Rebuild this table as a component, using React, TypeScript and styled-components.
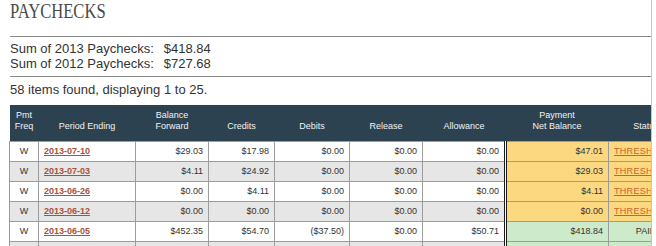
import React from "react";
import styled, { createGlobalStyle } from "styled-components";

const Global = createGlobalStyle`
  html, body { margin: 0; padding: 0; background: #fff; }
`;

const Frame = styled.div`
  width: 652px;
  min-height: 100vh;
  border-right: 1px solid #c6c6c6;
  overflow: hidden;
  padding-left: 10px;
  box-sizing: border-box;
`;

const Title = styled.h1`
  margin: 0;
  font-family: "Liberation Serif", "Times New Roman", serif;
  font-weight: normal;
  font-size: 20px;
  line-height: 22px;
  color: #4a4a4a;
  transform: scaleX(0.83);
  transform-origin: left center;
`;

const Rule = styled.div<{ $top: number }>`
  margin-top: ${(p) => p.$top}px;
  border-top: 1px solid #8a8a8a;
`;

const Summary = styled.div`
  margin-top: 4px;
  display: grid;
  grid-template-columns: max-content max-content;
  column-gap: 10px;
  font-family: "Liberation Sans", Arial, sans-serif;
  font-size: 13px;
  line-height: 15px;
  color: #333;
`;

const Count = styled.div`
  margin-top: 5px;
  font-family: "Liberation Sans", Arial, sans-serif;
  font-size: 13px;
  line-height: 15px;
  color: #333;
`;

const TableWrap = styled.div`
  margin-top: 8px;
  margin-left: -1px;
`;

const Table = styled.table`
  border-collapse: collapse;
  table-layout: fixed;
  width: 674px;
  font-family: "Liberation Sans", Arial, sans-serif;
`;

const Th = styled.th`
  background: #2c4251;
  color: #f2f2f2;
  font-weight: normal;
  font-size: 9px;
  line-height: 11px;
  text-align: center;
  vertical-align: bottom;
  padding: 0 2px 9px;
  height: 36px;
  box-sizing: border-box;
  border: none;
`;

type Tone = "plain" | "alt" | "due" | "paid";

const toneColor: Record<Tone, string> = {
  plain: "#ffffff",
  alt: "#e6e6e6",
  due: "#fcd881",
  paid: "#cdebcb",
};

const Td = styled.td<{ $tone: Tone; $align?: string; $double?: boolean }>`
  background: ${(p) => toneColor[p.$tone]};
  border: 1px solid #9c9c9c;
  ${(p) => (p.$double ? "border-left: 3px double #1a1a1a;" : "")}
  font-size: 9px;
  color: #333;
  text-align: ${(p) => p.$align ?? "right"};
  padding: 0 5px;
  height: 20px;
  box-sizing: border-box;
  white-space: nowrap;
  overflow: hidden;
`;

const DateLink = styled.a`
  color: #a9533b;
  font-weight: bold;
  text-decoration: underline;
`;

const StatusLink = styled.a`
  color: #c5652c;
  text-decoration: underline;
  letter-spacing: 0.3px;
`;

type Row = {
  date: string;
  fwd: string;
  credits: string;
  debits: string;
  release: string;
  allowance: string;
  net: string;
  status: "THRESHOLD" | "PAID";
};

const rows: Row[] = [
  { date: "2013-07-10", fwd: "$29.03", credits: "$17.98", debits: "$0.00", release: "$0.00", allowance: "$0.00", net: "$47.01", status: "THRESHOLD" },
  { date: "2013-07-03", fwd: "$4.11", credits: "$24.92", debits: "$0.00", release: "$0.00", allowance: "$0.00", net: "$29.03", status: "THRESHOLD" },
  { date: "2013-06-26", fwd: "$0.00", credits: "$4.11", debits: "$0.00", release: "$0.00", allowance: "$0.00", net: "$4.11", status: "THRESHOLD" },
  { date: "2013-06-12", fwd: "$0.00", credits: "$0.00", debits: "$0.00", release: "$0.00", allowance: "$0.00", net: "$0.00", status: "THRESHOLD" },
  { date: "2013-06-05", fwd: "$452.35", credits: "$54.70", debits: "($37.50)", release: "$0.00", allowance: "$50.71", net: "$418.84", status: "PAID" },
  { date: "2013-05-29", fwd: "$0.00", credits: "$452.35", debits: "$0.00", release: "$0.00", allowance: "$0.00", net: "$452.35", status: "PAID" },
];

const widths = [29, 97, 73, 66, 75, 73, 83, 103, 75];

export default function App() {
  return (
    <>
      <Global />
      <Frame>
        <Title>PAYCHECKS</Title>
        <Rule $top={14} />
        <Summary>
          <span>Sum of 2013 Paychecks:</span>
          <span>$418.84</span>
          <span>Sum of 2012 Paychecks:</span>
          <span>$727.68</span>
        </Summary>
        <Rule $top={5} />
        <Count>58 items found, displaying 1 to 25.</Count>
        <TableWrap>
          <Table>
            <colgroup>
              {widths.map((w, i) => (
                <col key={i} style={{ width: w }} />
              ))}
            </colgroup>
            <thead>
              <tr>
                <Th>Pmt<br />Freq</Th>
                <Th>Period Ending</Th>
                <Th>Balance<br />Forward</Th>
                <Th>Credits</Th>
                <Th>Debits</Th>
                <Th>Release</Th>
                <Th>Allowance</Th>
                <Th>Payment<br />Net Balance</Th>
                <Th>Status</Th>
              </tr>
            </thead>
            <tbody>
              {rows.map((r, i) => {
                const base: Tone = i % 2 === 0 ? "plain" : "alt";
                const stat: Tone = r.status === "PAID" ? "paid" : "due";
                return (
                  <tr key={r.date}>
                    <Td $tone={base} $align="center">W</Td>
                    <Td $tone={base} $align="left">
                      <DateLink href="#">{r.date}</DateLink>
                    </Td>
                    <Td $tone={base}>{r.fwd}</Td>
                    <Td $tone={base}>{r.credits}</Td>
                    <Td $tone={base}>{r.debits}</Td>
                    <Td $tone={base}>{r.release}</Td>
                    <Td $tone={base}>{r.allowance}</Td>
                    <Td $tone={stat} $double>{r.net}</Td>
                    {r.status === "PAID" ? (
                      <Td $tone={stat} $align="center">PAID</Td>
                    ) : (
                      <Td $tone={stat} $align="left">
                        <StatusLink href="#">THRESHOLD</StatusLink>
                      </Td>
                    )}
                  </tr>
                );
              })}
            </tbody>
          </Table>
        </TableWrap>
      </Frame>
    </>
  );
}
